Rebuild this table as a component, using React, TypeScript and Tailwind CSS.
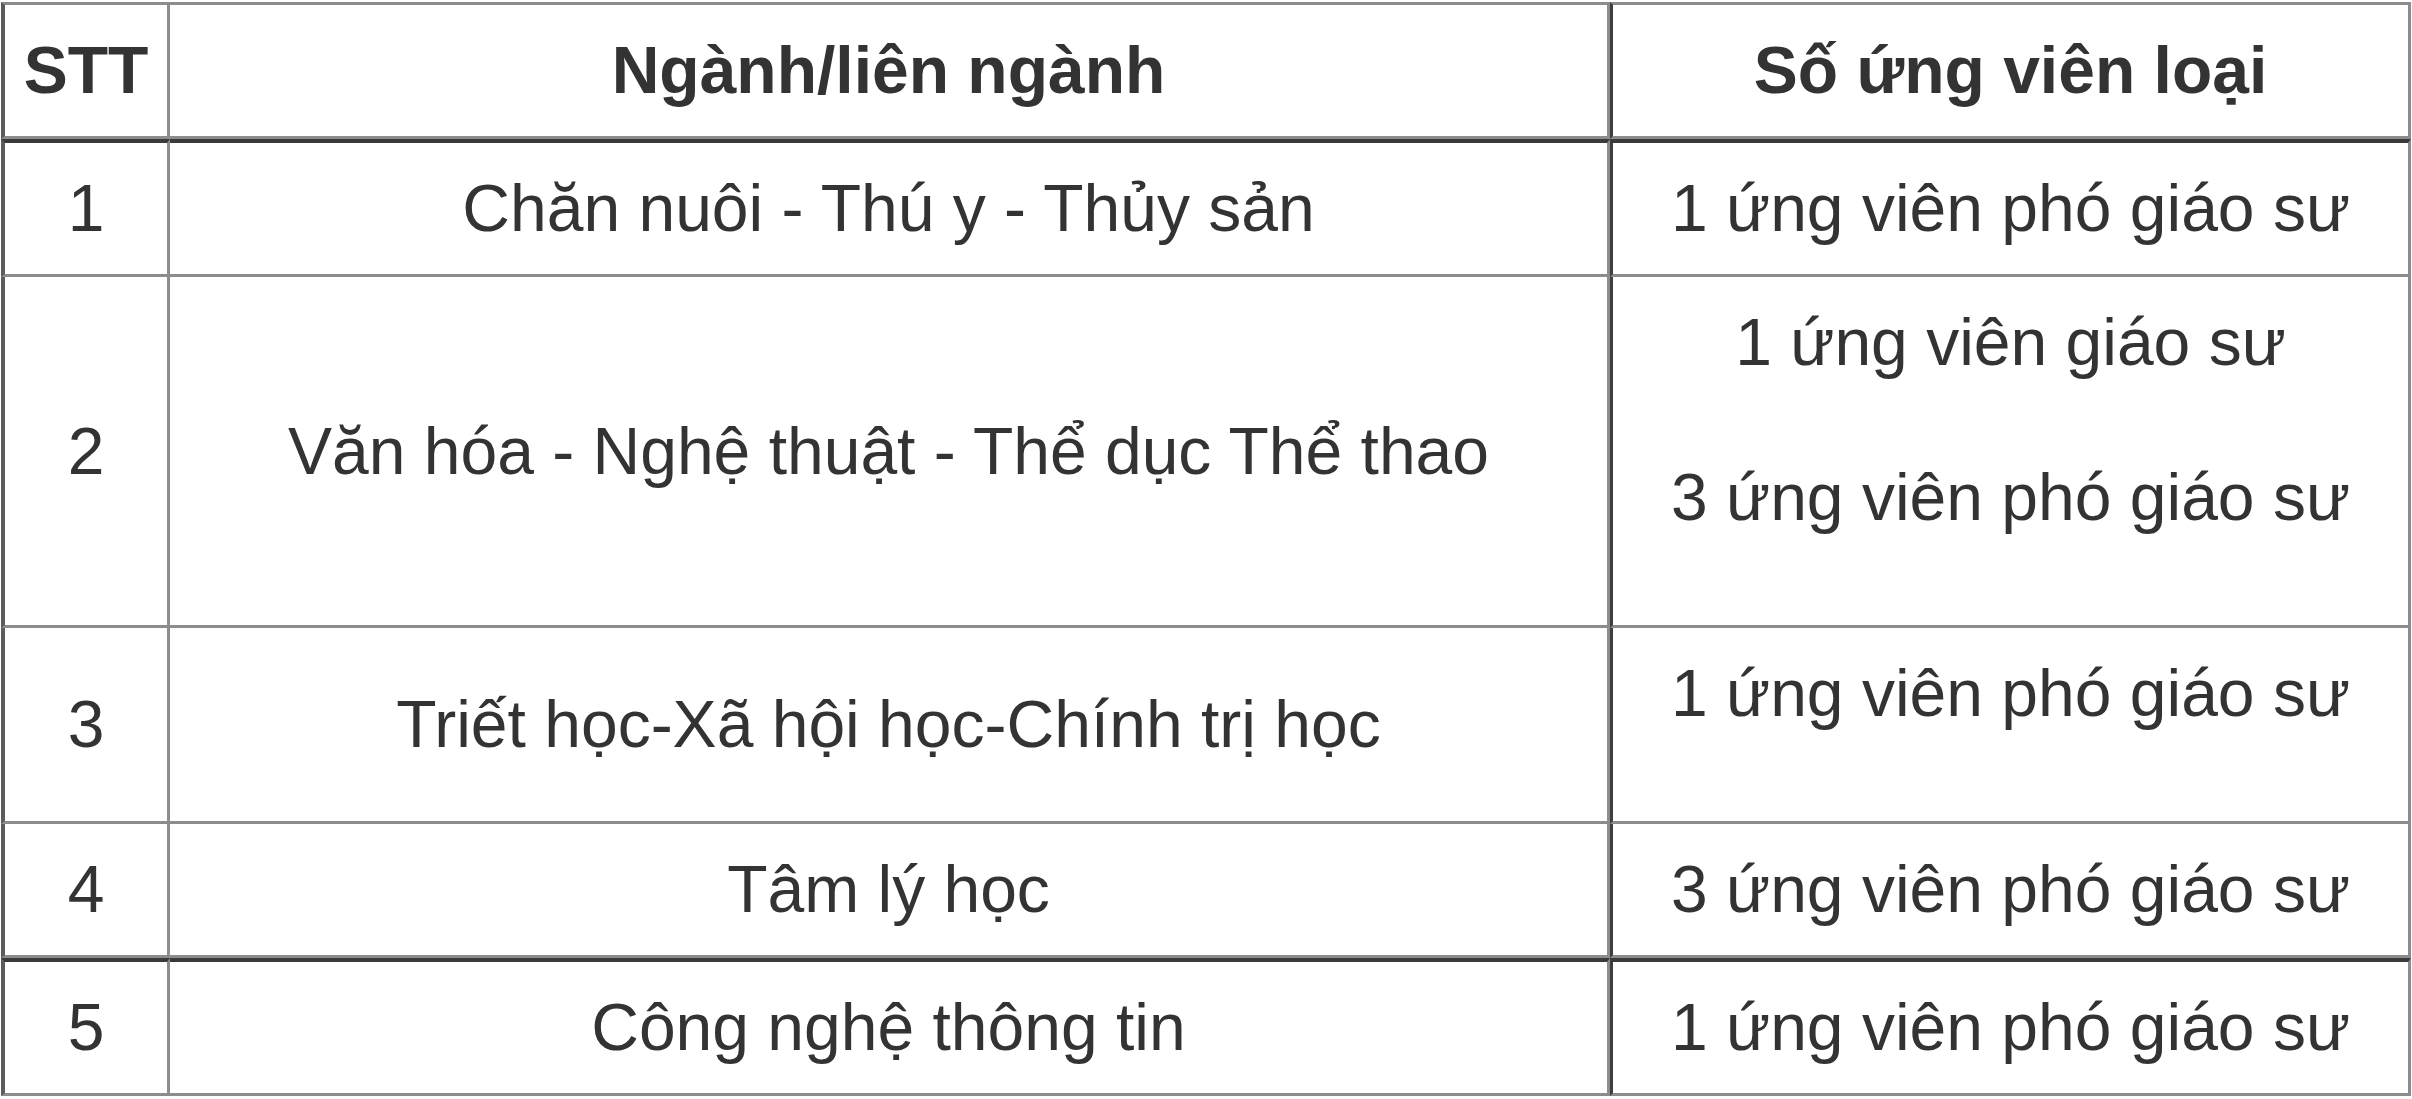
import React from "react";

type Row = {
  stt: string;
  nganh: string;
  ungVien: string[];
  // rows whose last cell text sits in paragraphs (with bottom margin)
  para?: boolean;
  thickTop?: boolean;
};

const rows: Row[] = [
  { stt: "1", nganh: "Chăn nuôi - Thú y - Thủy sản", ungVien: ["1 ứng viên phó giáo sư"], thickTop: true },
  {
    stt: "2",
    nganh: "Văn hóa - Nghệ thuật - Thể dục Thể thao",
    ungVien: ["1 ứng viên giáo sư", "3 ứng viên phó giáo sư"],
    para: true,
  },
  { stt: "3", nganh: "Triết học-Xã hội học-Chính trị học", ungVien: ["1 ứng viên phó giáo sư"], para: true },
  { stt: "4", nganh: "Tâm lý học", ungVien: ["3 ứng viên phó giáo sư"] },
  { stt: "5", nganh: "Công nghệ thông tin", ungVien: ["1 ứng viên phó giáo sư"], thickTop: true },
];

const cell = "border-r-[3px] border-b-[3px] border-[#8c8c8c] px-4 py-[19px] text-center align-middle";

function App() {
  return (
    <div
      className="min-h-screen bg-white pl-px pt-[2px] text-[66px] leading-[93px] text-[#333333]"
      style={{ fontFamily: '"Liberation Sans", Arial, sans-serif' }}
    >
      <table className="w-[2410px] table-fixed border-separate border-spacing-0">
        <colgroup>
          <col className="w-[169px]" />
          <col className="w-[1440px]" />
          <col className="w-[801px]" />
        </colgroup>
        <thead>
          <tr>
            <th className={`${cell} border-t-[3px] border-l-[4px] border-l-[#5c5c5c] font-bold`}>STT</th>
            <th className={`${cell} border-t-[3px] font-bold`}>Ngành/liên ngành</th>
            <th className={`${cell} border-t-[3px] border-l-[3px] border-l-[#3d3d3d] font-bold`}>Số ứng viên loại</th>
          </tr>
        </thead>
        <tbody>
          {rows.map((r) => {
            const top = r.thickTop ? "border-t-[4px] border-t-[#3a3a3a]" : "";
            return (
              <tr key={r.stt}>
                <td className={`${cell} ${top} border-l-[4px] border-l-[#5c5c5c]`}>{r.stt}</td>
                <td className={`${cell} ${top}`}>{r.nganh}</td>
                <td className={`${cell} ${top} border-l-[3px] border-l-[#3d3d3d]`}>
                  {r.para
                    ? r.ungVien.map((t) => (
                        <p key={t} className="mb-[62px]">
                          {t}
                        </p>
                      ))
                    : r.ungVien[0]}
                </td>
              </tr>
            );
          })}
        </tbody>
      </table>
    </div>
  );
}

export default App;
